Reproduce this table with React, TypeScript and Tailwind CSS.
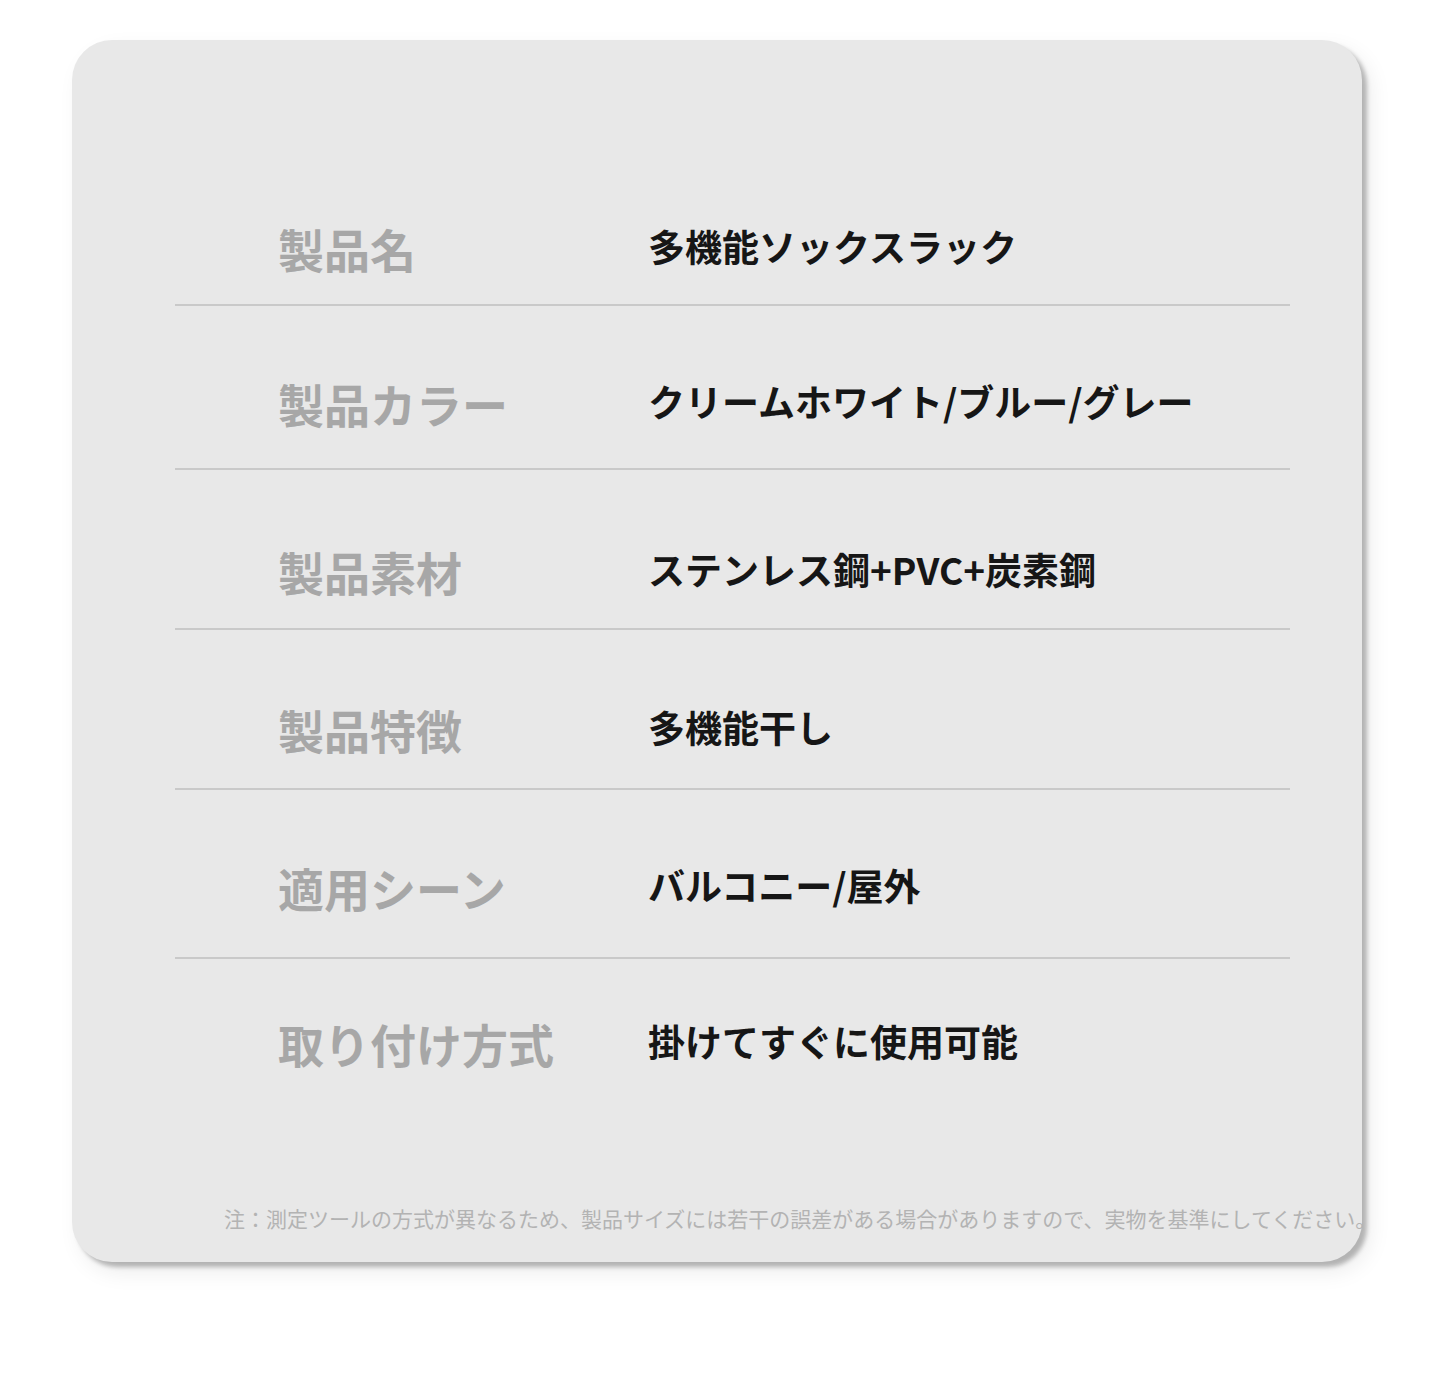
import React from "react";

const rows = [
  { label: "製品名", value: "多機能ソックスラック", h: "h-[116px]", pt: "pt-[35px]", border: true },
  { label: "製品カラー", value: "クリームホワイト/ブルー/グレー", h: "h-[164px]", pt: "pt-[74px]", border: true },
  { label: "製品素材", value: "ステンレス鋼+PVC+炭素鋼", h: "h-[160px]", pt: "pt-[78px]", border: true },
  { label: "製品特徴", value: "多機能干し", h: "h-[160px]", pt: "pt-[76px]", border: true },
  { label: "適用シーン", value: "バルコニー/屋外", h: "h-[169px]", pt: "pt-[74px]", border: true },
  { label: "取り付け方式", value: "掛けてすぐに使用可能", h: "h-[130px]", pt: "pt-[61px]", border: false },
];

export default function App() {
  return (
    <div
      className="w-[1440px] h-[1399px] bg-white pt-[40px] pl-[72px]"
      style={{ fontFamily: '"Noto Sans CJK JP", "Noto Sans", sans-serif' }}
    >
      <div className="w-[1290px] h-[1222px] rounded-[40px] bg-[#e8e8e8] shadow-[5px_5px_4px_rgba(0,0,0,0.25),8px_10px_22px_rgba(0,0,0,0.08)] pt-[150px] pl-[103px] pr-[72px] flex flex-col">
        {rows.map((r) => (
          <div
            key={r.label}
            className={`${r.h} ${r.pt} ${r.border ? "border-b-2 border-[#c9c9c9]" : ""} flex`}
          >
            <div className="flex items-center h-[46px]">
              <div className="w-[473px] shrink-0 pl-[103px] text-[46px] leading-none font-bold text-[#a7a7a7] whitespace-nowrap">
                {r.label}
              </div>
              <div className="mb-[4px] text-[37px] leading-none font-bold text-[#161616] whitespace-nowrap">
                {r.value}
              </div>
            </div>
          </div>
        ))}
        <div className="mt-[119px] pl-[49px] text-[21px] leading-none text-[#b3b3b3] whitespace-nowrap">
          注：測定ツールの方式が異なるため、製品サイズには若干の誤差がある場合がありますので、実物を基準にしてください。
        </div>
      </div>
    </div>
  );
}
